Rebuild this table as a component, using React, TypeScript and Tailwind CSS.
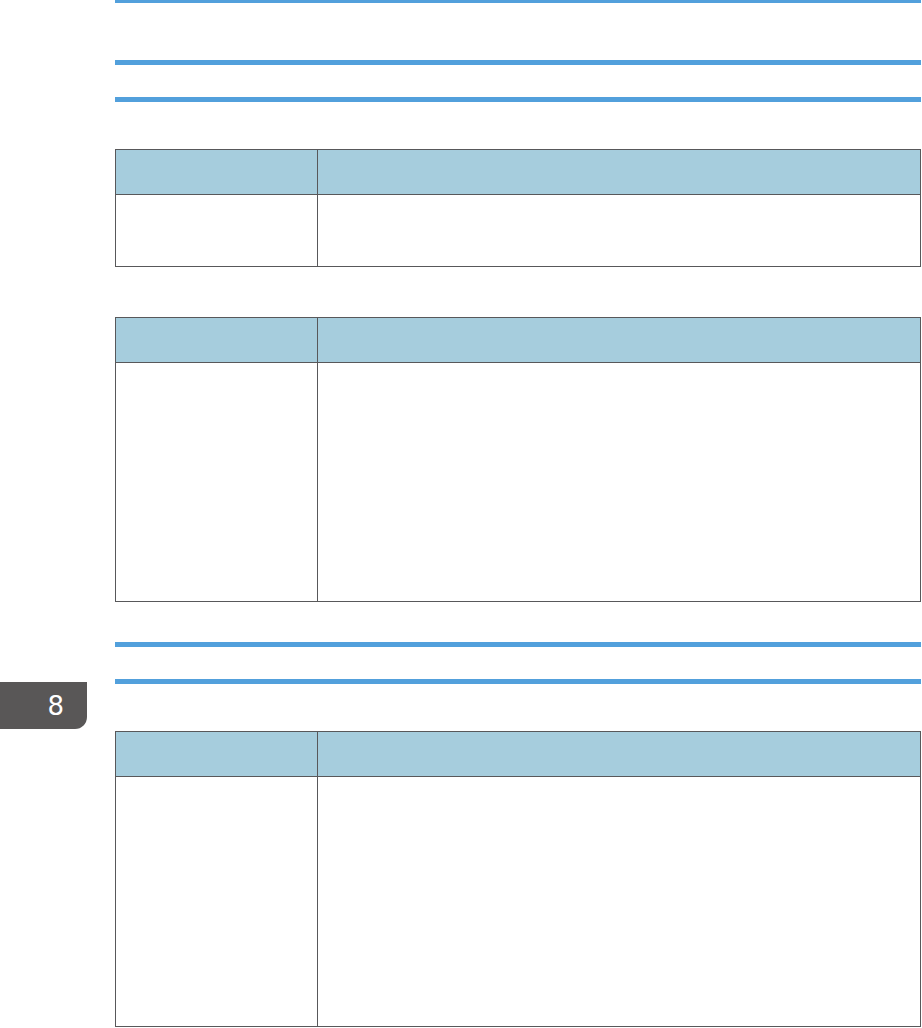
const lineColor = 'bg-[#52a0dc]';

interface TableProps {
    bodyHeight: string;
}

const Rule = ({ className }: { className: string }) => (
    <div className={`w-[806px] h-[5px] ${lineColor} ${className}`} />
);

const SpecTable: React.FC<TableProps & { className?: string }> = ({ bodyHeight, className }) => (
    <div className={`w-[806px] border border-[#58585a] ${className ?? ''}`}>
        <div className="flex h-[45px] bg-[#a6cddd] border-b border-[#58585a]">
            <div className="w-[202px] border-r border-[#58585a]" />
            <div className="flex-1" />
        </div>
        <div className={`flex ${bodyHeight}`}>
            <div className="w-[202px] border-r border-[#58585a]" />
            <div className="flex-1" />
        </div>
    </div>
);

export default function App() {
    return (
        <div className="relative w-[922px] h-[1028px] overflow-hidden bg-white">
            <div className="flex flex-col pl-[115px]">
                <div className={`w-[806px] h-[3px] ${lineColor}`} />
                <Rule className="mt-[57px]" />
                <Rule className="mt-[32px]" />
                <SpecTable className="mt-[47px]" bodyHeight="h-[71px]" />
                <SpecTable className="mt-[50px]" bodyHeight="h-[238px]" />
                <Rule className="mt-[40px]" />
                <Rule className="mt-[32px]" />
                <SpecTable className="mt-[47px]" bodyHeight="h-[249px]" />
            </div>
            <div
                className="absolute left-0 top-[682px] w-[87px] h-[47px] bg-[#595757] rounded-br-[12px] flex items-center justify-end pr-[23px] text-white text-[26px] leading-none"
                style={{ fontFamily: '"DejaVu Sans", sans-serif' }}
            >
                8
            </div>
        </div>
    );
}
